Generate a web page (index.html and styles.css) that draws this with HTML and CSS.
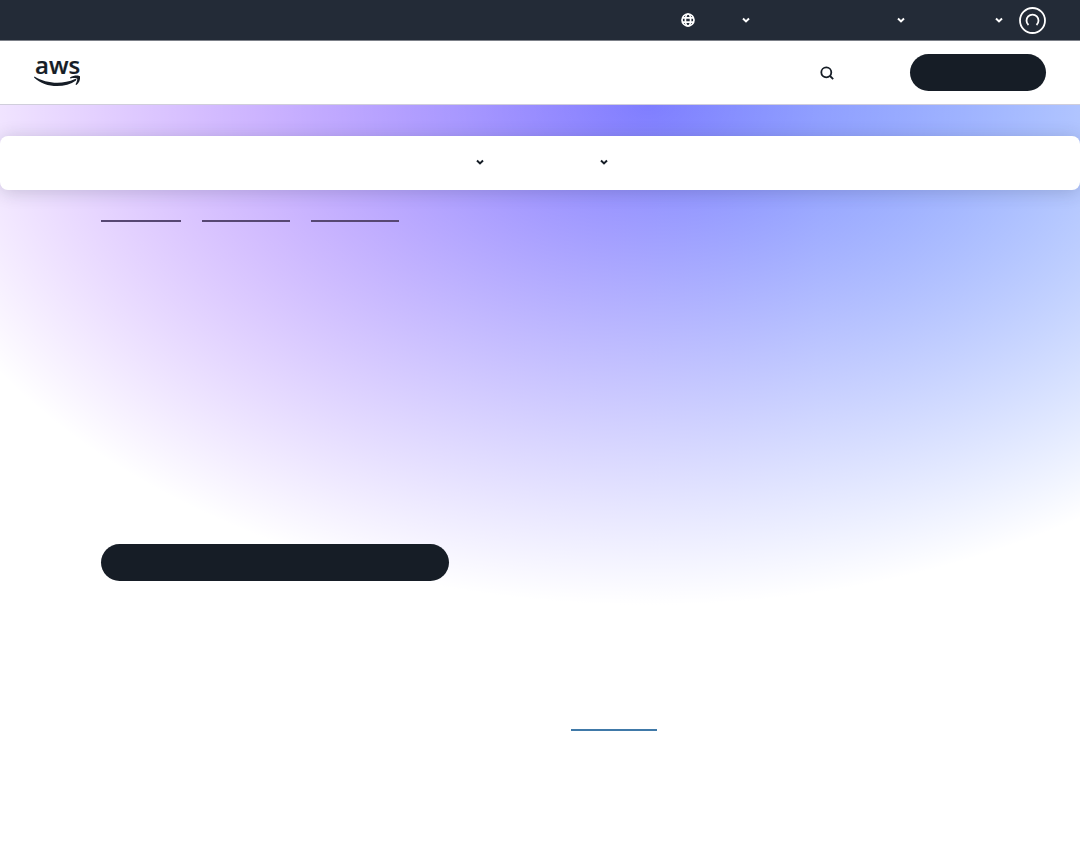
FILE: index.html
```html
<!DOCTYPE html>
<html lang="en">
<head>
<meta charset="utf-8">
<meta name="viewport" content="width=device-width, initial-scale=1">
<title>AWS</title>
<link rel="stylesheet" href="styles.css">
</head>
<body>
<svg class="sprite" aria-hidden="true">
  <symbol id="chevron" viewBox="0 0 8 8"><path d="M1 2.5 4 5.4 7 2.5" fill="none" stroke="currentColor" stroke-width="2"/></symbol>
</svg>
<div class="topbar">
  <button class="menu language" aria-label="Language">
    <svg class="globe" viewBox="0 0 14 14" fill="none" stroke="currentColor" stroke-width="1.7"><circle cx="7" cy="7" r="6"/><ellipse cx="7" cy="7" rx="2.6" ry="6"/><path d="M1.5 4.9h11M1.5 9.1h11"/></svg>
    <svg class="chevron"><use href="#chevron"/></svg>
  </button>
  <button class="menu account" aria-label="Account"><svg class="chevron"><use href="#chevron"/></svg></button>
  <button class="menu support" aria-label="Support"><svg class="chevron"><use href="#chevron"/></svg></button>
  <button class="profile" aria-label="Profile">
    <svg viewBox="0 0 27 27" fill="none" stroke="currentColor"><circle cx="13.500" cy="13.500" r="12.500" stroke-width="1.800"/><path d="M9.500 18A6 6 0 1 1 17.500 18" stroke-width="1.800"/></svg>
  </button>
</div>
<header class="header">
  <a class="logo" href="#" aria-label="AWS home">
    <svg viewBox="0 0 48 48"><text class="wordmark" x="1" y="25">aws</text><path d="M0.500 27.500C12 34.600 28 36 41 30Q43.300 29.700 42 31.400C31 39.500 11 39.200 0 28.500ZM36 28.500C40 26 44.500 26.300 46 27.200 46.600 30.500 45 34 42.500 36L41.500 35.500C42.700 33 43.600 30.700 43.200 29.700 42 28.800 39 29.100 36.300 29.500Z"/></svg>
  </a>
  <button class="search" aria-label="Search"><svg viewBox="0 0 14 14" fill="none" stroke="currentColor" stroke-width="1.8"><circle cx="6.300" cy="6.300" r="5"/><path d="m10 10 3.200 3.200"/></svg></button>
  <button class="pill signup" aria-label="Create account"></button>
</header>
<main class="hero">
  <nav class="subnav" aria-label="Section">
    <button class="menu tab" aria-label="Products"><svg class="chevron"><use href="#chevron"/></svg></button>
    <button class="menu tab" aria-label="Resources"><svg class="chevron"><use href="#chevron"/></svg></button>
    <a class="plain-tab" href="#" aria-label="Pricing"></a>
  </nav>
  <div class="content">
    <nav class="crumbs" aria-label="Breadcrumb">
      <a class="crumb short" href="#" aria-label="Home"></a>
      <a class="crumb" href="#" aria-label="Category"></a>
      <a class="crumb" href="#" aria-label="Product"></a>
    </nav>
    <button class="pill start" aria-label="Get started"></button>
    <div class="columns"><a class="learn" href="#" aria-label="Learn more"></a></div>
  </div>
</main>
</body>
</html>
```
FILE: styles.css
```css
* { box-sizing: border-box; }
body { margin: 0; background: #fff; color: #161d26; font-family: "Open Sans", sans-serif; }
button { border: 0; padding: 0; background: none; color: inherit; cursor: pointer; }
svg { display: block; }
.sprite { display: none; }
.topbar { display: flex; align-items: center; justify-content: flex-end; height: 40px; padding: 0 34px; background: #232b37; color: #fff; }
.menu { display: flex; align-items: center; justify-content: flex-end; height: 28px; }
.chevron { width: 8px; height: 8px; }
.language { width: 69px; justify-content: space-between; }
.globe { width: 14px; height: 14px; }
.account { width: 155px; }
.support { width: 98px; }
.profile { margin-left: 16px; }
.profile svg { width: 27px; height: 27px; }
.header { display: flex; align-items: center; height: 64px; padding: 0 34px; border-top: 1px solid #7c8088; }
.logo { margin-right: auto; color: inherit; }
.logo svg { width: 48px; height: 48px; fill: currentColor; }
.wordmark { font-size: 24px; font-weight: 600; stroke: currentColor; stroke-width: .2px; }
.search { margin-right: 76px; }
.search svg { width: 14px; height: 14px; }
.pill { display: block; height: 37px; border-radius: 19px; background: #161d26; }
.signup { width: 136px; }
.hero {
  padding-top: 31px;
  min-height: 760px;
  border-top: 1px solid #d0cedb;
  background:
    radial-gradient(71% 500px at 60% 0, rgba(255,255,255,0), #fff),
    linear-gradient(90deg, #a050ff, #9866ff 24%, #8c76ff 42%, #817dff 58%, #7084ff 76%, #4b79ff);
}
.subnav { display: flex; align-items: center; justify-content: center; height: 54px; border-radius: 8px; background: #fff; box-shadow: 0 2px 18px rgba(35,43,55,.2); }
.subnav .menu { height: 24px; margin-bottom: 2px; }
.tab { width: 124px; }
.plain-tab { width: 112px; height: 28px; }
.content { padding: 30px 101px; }
.crumbs { display: flex; gap: 21px; margin-bottom: 322px; }
.crumb { width: 88px; border-bottom: 2px solid #574773; }
.short { width: 80px; }
.start { width: 348px; max-width: 100%; }
.columns { display: grid; grid-template-columns: 1fr 1fr; column-gap: 62px; padding-top: 148px; }
.learn { grid-column: 2; width: 86px; border-bottom: 2px solid #4079a8; }
```
